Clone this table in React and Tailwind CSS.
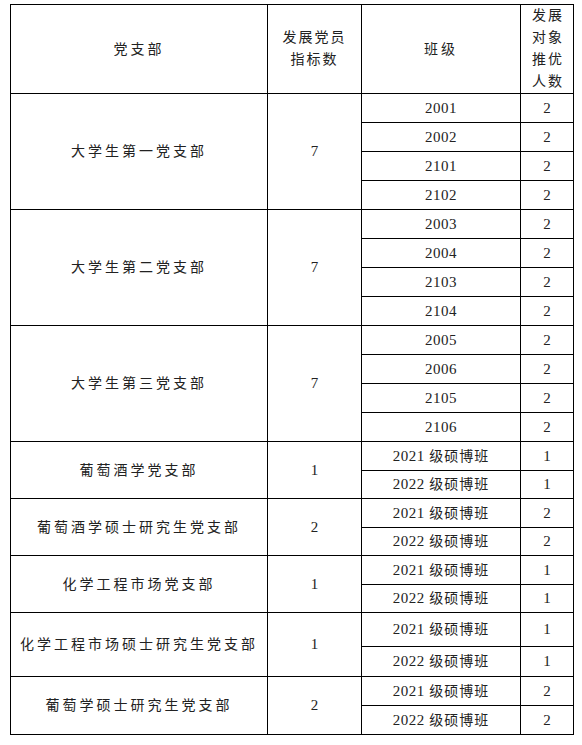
import React from "react";

const groups = [
  { name: "大学生第一党支部", quota: "7", rows: [["2001", "2"], ["2002", "2"], ["2101", "2"], ["2102", "2"]], h: ["h-[29px]", "h-[29px]", "h-[29px]", "h-[29px]"] },
  { name: "大学生第二党支部", quota: "7", rows: [["2003", "2"], ["2004", "2"], ["2103", "2"], ["2104", "2"]], h: ["h-[29px]", "h-[29px]", "h-[29px]", "h-[29px]"] },
  { name: "大学生第三党支部", quota: "7", rows: [["2005", "2"], ["2006", "2"], ["2105", "2"], ["2106", "2"]], h: ["h-[29px]", "h-[29px]", "h-[29px]", "h-[29px]"] },
  { name: "葡萄酒学党支部", quota: "1", rows: [["2021", "1"], ["2022", "1"]], h: ["h-[28.5px]", "h-[28.5px]"], cls: true },
  { name: "葡萄酒学硕士研究生党支部", quota: "2", rows: [["2021", "2"], ["2022", "2"]], h: ["h-[28.5px]", "h-[28.5px]"], cls: true },
  { name: "化学工程市场党支部", quota: "1", rows: [["2021", "1"], ["2022", "1"]], h: ["h-[28.5px]", "h-[28.5px]"], cls: true },
  { name: "化学工程市场硕士研究生党支部", quota: "1", rows: [["2021", "1"], ["2022", "1"]], h: ["h-[34px]", "h-[30px]"], cls: true },
  { name: "葡萄学硕士研究生党支部", quota: "2", rows: [["2021", "2"], ["2022", "2"]], h: ["h-[29px]", "h-[29px]"], cls: true },
];

const cjk = "font-['Liberation_Serif','Noto_Sans_CJK_SC',serif]";
const td = "border border-black p-0 text-center align-middle";

export default function App() {
  return (
    <div className={`bg-white w-[582px] h-[745px] pt-[4px] pl-[10px] text-[#222] ${cjk}`}>
      <table className="border-collapse table-fixed w-[563px]">
        <colgroup>
          <col className="w-[257px]" />
          <col className="w-[94px]" />
          <col className="w-[159px]" />
          <col className="w-[53px]" />
        </colgroup>
        <tbody>
          <tr className="h-[89px]">
            <td className={`${td} text-[14px] tracking-[3px]`}>党支部</td>
            <td className={`${td} text-[14px] tracking-[2px] leading-[22px]`}>
              发展党员<br />指标数
            </td>
            <td className={`${td} text-[14px] tracking-[3px]`}>班级</td>
            <td className={`${td} text-[14px] tracking-[2px] leading-[22px] pl-[2px]`}>
              发展<br />对象<br />推优<br />人数
            </td>
          </tr>
          {groups.map((g, gi) =>
            g.rows.map((r, ri) => (
              <tr key={`${gi}-${ri}`} className={g.h[ri]}>
                {ri === 0 && (
                  <td rowSpan={g.rows.length} className={`${td} text-[14px] tracking-[3px]`}>
                    {g.name}
                  </td>
                )}
                {ri === 0 && (
                  <td rowSpan={g.rows.length} className={`${td} text-[15px]`}>
                    {g.quota}
                  </td>
                )}
                <td className={`${td} text-[15px]`}>
                  {g.cls ? (
                    <span>
                      <span className="tracking-[0.5px]">{r[0]}</span>
                      <span className="text-[14px] tracking-[1px]"> 级硕博班</span>
                    </span>
                  ) : (
                    <span className="tracking-[0.5px]">{r[0]}</span>
                  )}
                </td>
                <td className={`${td} text-[15px]`}>{r[1]}</td>
              </tr>
            ))
          )}
        </tbody>
      </table>
    </div>
  );
}
